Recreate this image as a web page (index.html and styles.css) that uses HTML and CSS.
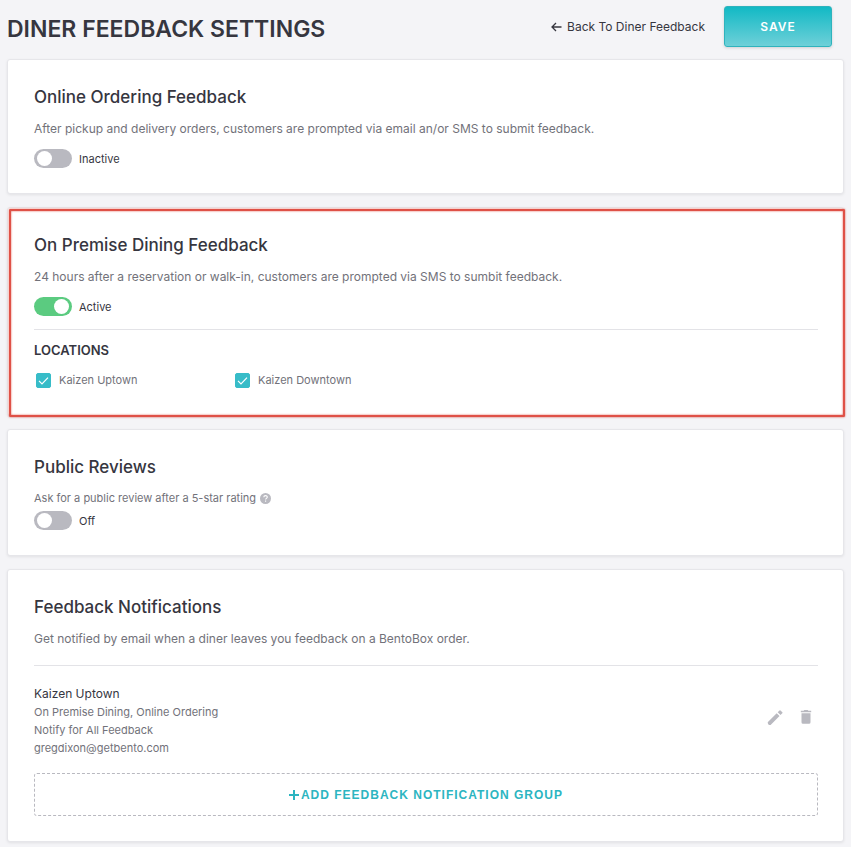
FILE: index.html
```html
<!DOCTYPE html>
<html lang="en">

<head>
    <meta charset="UTF-8">
    <meta name="viewport" content="width=device-width, initial-scale=1.0">
    <title>Diner Feedback Settings</title>
    <link rel="stylesheet" href="styles.css">
</head>

<body>
    <header class="page-header">
        <h1>Diner Feedback Settings</h1>
        <a class="back-link" href="#">
            <svg width="11" height="10" viewBox="0 0 11 10" aria-hidden="true">
                <path d="M10.5 5H1.2M5 1L1 5l4 4" fill="none" stroke="currentColor" stroke-width="1.3" />
            </svg>
            Back To Diner Feedback
        </a>
        <button class="save" type="button">Save</button>
    </header>

    <main class="cards">
        <section class="card">
            <h2>Online Ordering Feedback</h2>
            <p class="description">After pickup and delivery orders, customers are prompted via email an/or SMS to submit feedback.</p>
            <label class="toggle">
                <input type="checkbox" role="switch">
                <span>Inactive</span>
            </label>
        </section>

        <section class="card highlighted">
            <h2>On Premise Dining Feedback</h2>
            <p class="description">24 hours after a reservation or walk-in, customers are prompted via SMS to sumbit feedback.</p>
            <label class="toggle">
                <input type="checkbox" role="switch" checked>
                <span>Active</span>
            </label>
            <div class="locations">
                <h3>Locations</h3>
                <div class="location-list">
                    <label class="location">
                        <input type="checkbox" checked>
                        <svg class="tick" width="15" height="15" viewBox="0 0 15 15" aria-hidden="true">
                            <path d="M3 7.8l3 3 6-6.2" fill="none" stroke="#fff" stroke-width="1.2" />
                        </svg>
                        <span>Kaizen Uptown</span>
                    </label>
                    <label class="location">
                        <input type="checkbox" checked>
                        <svg class="tick" width="15" height="15" viewBox="0 0 15 15" aria-hidden="true">
                            <path d="M3 7.8l3 3 6-6.2" fill="none" stroke="#fff" stroke-width="1.2" />
                        </svg>
                        <span>Kaizen Downtown</span>
                    </label>
                </div>
            </div>
        </section>

        <section class="card">
            <h2>Public Reviews</h2>
            <p class="question">
                Ask for a public review after a 5-star rating
                <svg width="11" height="11" viewBox="0 0 11 11" aria-hidden="true">
                    <circle cx="5.5" cy="5.5" r="5.5" fill="#b9b9c0" />
                    <path d="M3.8 4.3c0-2.3 3.5-2.2 3.5-.2 0 1.3-1.7 1.3-1.7 2.5M5.6 7.6v1.1" fill="none" stroke="#fff" stroke-width="1.1" />
                </svg>
            </p>
            <label class="toggle">
                <input type="checkbox" role="switch">
                <span>Off</span>
            </label>
        </section>

        <section class="card">
            <h2>Feedback Notifications</h2>
            <p class="description">Get notified by email when a diner leaves you feedback on a BentoBox order.</p>
            <div class="group">
                <div class="group-info">
                    <h4>Kaizen Uptown</h4>
                    <p>On Premise Dining, Online Ordering</p>
                    <p>Notify for All Feedback</p>
                    <p>gregdixon@getbento.com</p>
                </div>
                <div class="group-actions">
                    <button type="button" aria-label="Edit">
                        <svg width="16" height="16" viewBox="0 0 16 16" aria-hidden="true">
                            <path d="M.7 13.300L9.700 4.300l2.800 2.800-9 9q-2.800.4-2.800-2.800zM10.700 3.300l1.800-1.800q.5-.5 1 0l1.800 1.800q.5.500 0 1l-1.800 1.800z" fill="currentColor" />
                        </svg>
                    </button>
                    <button type="button" aria-label="Delete">
                        <svg width="12" height="14" viewBox="0 0 12 14" aria-hidden="true">
                            <path d="M.8.8h2.800L4.300 0h3.400l.7.8h2.800v1.500H.8zM1.500 3.200h9v9q0 1.500-1.500 1.500H3q-1.500 0-1.500-1.500z" fill="currentColor" />
                        </svg>
                    </button>
                </div>
            </div>
            <button class="add-group" type="button">
                <svg width="10" height="10" viewBox="0 0 10 10" aria-hidden="true">
                    <path d="M5 0v10M0 5h10" stroke="currentColor" stroke-width="2" />
                </svg>
                Add Feedback Notification Group
            </button>
        </section>
    </main>
</body>

</html>
```

FILE: styles.css
```css
* {
    box-sizing: border-box;
}

body {
    margin: 0;
    padding: 6px 7px 5px;
    font-family: Inter, "Liberation Sans", sans-serif;
    font-size: 12px;
    line-height: 18px;
    color: #36363f;
    background-color: #f4f4f7;
}

h1,
h2,
h3,
h4,
p {
    margin: 0;
}

button {
    font-family: inherit;
    cursor: pointer;
}

.page-header {
    display: flex;
    align-items: center;
    margin-bottom: 12px;
    padding-right: 12px;
}

h1 {
    flex: 1;
    padding-top: 4px;
    font-size: 23px;
    line-height: 36px;
    font-weight: 600;
    text-transform: uppercase;
}

.back-link {
    display: flex;
    align-items: center;
    gap: 5px;
    margin-right: 19px;
    color: #36363f;
    text-decoration: none;
}

.save {
    width: 108px;
    height: 41px;
    font-size: 12px;
    font-weight: 600;
    letter-spacing: 1px;
    text-transform: uppercase;
    color: #ffffff;
    background: linear-gradient(#12b9c5, #6ed0d8);
    border: 1px solid #2fb3bd;
    border-radius: 3px;
    box-shadow: 0 1px 3px rgba(0, 0, 0, 0.15);
}

.cards {
    display: flex;
    flex-direction: column;
    gap: 13px;
}

.card {
    position: relative;
    padding: 25px 25px 25px 26px;
    background: #ffffff;
    border: 1px solid #e6e6ea;
    border-radius: 3px;
    box-shadow: 0 1px 3px rgba(0, 0, 0, 0.08);
}

/* red frame sits slightly off the card */
.highlighted::after {
    content: "";
    position: absolute;
    inset: 1px -2px -2px 1px;
    border: 2px solid #df5147;
    border-radius: 1px;
    box-shadow: 0 0 2px #df5147, inset 0 0 2px #df5147;
    pointer-events: none;
}

h2 {
    margin-bottom: 10px;
    font-size: 17px;
    line-height: 24px;
    font-weight: 500;
}

.description {
    margin-bottom: 10px;
    line-height: 20px;
    color: #72727a;
}

.question {
    display: flex;
    align-items: center;
    gap: 4px;
    margin-bottom: 4px;
    font-size: 11px;
    color: #72727a;
}

.toggle {
    display: flex;
    align-items: center;
    gap: 7px;
    height: 19px;
    font-size: 11px;
}

.toggle input {
    appearance: none;
    width: 38px;
    height: 19px;
    margin: 0;
    padding: 2px 3px;
    border-radius: 10px;
    background: #b9b9c0;
}

.toggle input::before {
    content: "";
    display: block;
    width: 15px;
    height: 15px;
    border-radius: 50%;
    background: #ffffff;
}

.toggle input:checked {
    background: #5bcb80;
}

.toggle input:checked::before {
    margin-left: auto;
}

.locations {
    margin-top: 13px;
    padding-top: 10px;
    border-top: 1px solid #e3e3e7;
}

h3 {
    margin-bottom: 10px;
    font-size: 13px;
    line-height: 20px;
    font-weight: 600;
    text-transform: uppercase;
}

.location-list {
    display: flex;
}

.location {
    position: relative;
    display: flex;
    align-items: center;
    gap: 8px;
    width: 199px;
    height: 20px;
    padding-left: 2px;
    font-size: 11px;
    color: #72727a;
}

.location input {
    appearance: none;
    width: 15px;
    height: 15px;
    margin: 0;
    border: 1px solid #37bcc8;
    border-radius: 2px;
}

.location input:checked {
    background: #37bcc8;
}

/* tick is drawn over the box */
.tick {
    position: absolute;
    left: 2px;
    visibility: hidden;
}

.location input:checked + .tick {
    visibility: visible;
}

.group {
    display: flex;
    align-items: center;
    justify-content: space-between;
    margin: 16px 0;
    padding-top: 19px;
    border-top: 1px solid #e3e3e7;
}

.group-info {
    font-size: 11px;
    color: #72727a;
}

h4 {
    font-size: 12px;
    font-weight: 400;
    color: #36363f;
}

.group-actions {
    display: flex;
    align-items: center;
    gap: 17px;
    padding: 0 6px 8px 0;
}

.group-actions button {
    display: flex;
    padding: 0;
    color: #b9b9c0;
    background: none;
    border: none;
}

.add-group {
    display: flex;
    align-items: center;
    justify-content: center;
    gap: 2px;
    width: 100%;
    height: 43px;
    font-family: "Liberation Sans", Arial, sans-serif;
    font-size: 12px;
    font-weight: 700;
    letter-spacing: 1px;
    text-transform: uppercase;
    color: #2cb5c1;
    background: none;
    border: 1px dashed #b9b9c0;
    border-radius: 3px;
}
```
